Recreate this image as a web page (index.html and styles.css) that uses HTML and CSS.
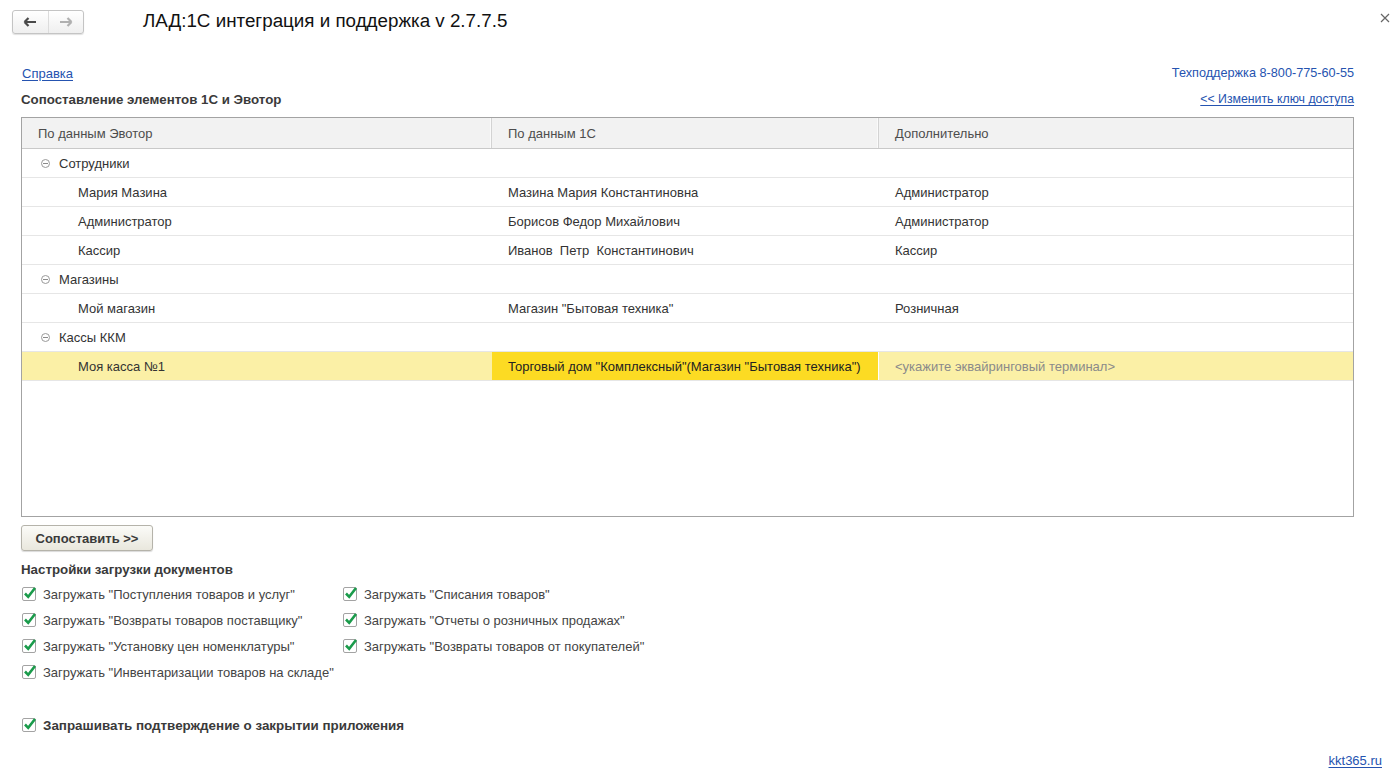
FILE: index.html
```html
<!DOCTYPE html>
<html lang="ru">
<head>
<meta charset="utf-8">
<title>ЛАД:1С интеграция и поддержка</title>
<link rel="stylesheet" href="styles.css">
</head>
<body>
<div class="window">
  <div class="topbar">
    <div class="navgroup">
      <button class="navbtn" aria-label="Назад">
        <svg width="14" height="10" viewBox="0 0 14 10"><path d="M1.5 5H13M1.5 5L5.5 1M1.5 5L5.5 9" fill="none" stroke="#4a4a4a" stroke-width="2.2"/></svg>
      </button>
      <button class="navbtn" aria-label="Вперёд">
        <svg width="14" height="10" viewBox="0 0 14 10"><path d="M1 5H12.5M12.5 5L8.5 1M12.5 5L8.5 9" fill="none" stroke="#b0b0b0" stroke-width="2.2"/></svg>
      </button>
    </div>
    <div class="title">ЛАД:1С интеграция и поддержка v 2.7.7.5</div>
    <div class="close">
      <svg width="10" height="10" viewBox="0 0 10 10"><path d="M1 1L9 9M9 1L1 9" stroke="#666" stroke-width="1.2"/></svg>
    </div>
  </div>

  <div class="content">
    <div class="row-between links">
      <a href="#" class="link">Справка</a>
      <span class="support">Техподдержка 8-800-775-60-55</span>
    </div>
    <div class="row-between heading-row">
      <span class="section-title">Сопоставление элементов 1С и Эвотор</span>
      <a href="#" class="link small">&lt;&lt; Изменить ключ доступа</a>
    </div>

    <div class="grid">
      <div class="thead">
        <div class="th c1">По данным Эвотор</div>
        <div class="th c2">По данным 1С</div>
        <div class="th c3">Дополнительно</div>
      </div>
      <div class="tr group">
        <div class="td c1"><span class="toggle"></span>Сотрудники</div>
        <div class="td c2"></div>
        <div class="td c3"></div>
      </div>
      <div class="tr">
        <div class="td c1 child">Мария Мазина</div>
        <div class="td c2">Мазина Мария Константиновна</div>
        <div class="td c3">Администратор</div>
      </div>
      <div class="tr">
        <div class="td c1 child">Администратор</div>
        <div class="td c2">Борисов Федор Михайлович</div>
        <div class="td c3">Администратор</div>
      </div>
      <div class="tr">
        <div class="td c1 child">Кассир</div>
        <div class="td c2">Иванов&nbsp; Петр&nbsp; Константинович</div>
        <div class="td c3">Кассир</div>
      </div>
      <div class="tr group">
        <div class="td c1"><span class="toggle"></span>Магазины</div>
        <div class="td c2"></div>
        <div class="td c3"></div>
      </div>
      <div class="tr">
        <div class="td c1 child">Мой магазин</div>
        <div class="td c2">Магазин "Бытовая техника"</div>
        <div class="td c3">Розничная</div>
      </div>
      <div class="tr group">
        <div class="td c1"><span class="toggle"></span>Кассы ККМ</div>
        <div class="td c2"></div>
        <div class="td c3"></div>
      </div>
      <div class="tr selected">
        <div class="td c1 child">Моя касса №1</div>
        <div class="td c2 current">Торговый дом "Комплексный"(Магазин "Бытовая техника")</div>
        <div class="td c3 placeholder">&lt;укажите эквайринговый терминал&gt;</div>
      </div>
    </div>

    <button class="btn">Сопоставить &gt;&gt;</button>

    <div class="section-title settings-title">Настройки загрузки документов</div>
    <div class="checks">
      <div class="checkcol first">
        <label class="check"><span class="box"><svg width="16" height="15" viewBox="0 0 16 15"><path d="M3 7.5L6.2 10.8L13 2" fill="none" stroke="#1a9b4b" stroke-width="2.6"/></svg></span>Загружать "Поступления товаров и услуг"</label>
        <label class="check"><span class="box"><svg width="16" height="15" viewBox="0 0 16 15"><path d="M3 7.5L6.2 10.8L13 2" fill="none" stroke="#1a9b4b" stroke-width="2.6"/></svg></span>Загружать "Возвраты товаров поставщику"</label>
        <label class="check"><span class="box"><svg width="16" height="15" viewBox="0 0 16 15"><path d="M3 7.5L6.2 10.8L13 2" fill="none" stroke="#1a9b4b" stroke-width="2.6"/></svg></span>Загружать "Установку цен номенклатуры"</label>
        <label class="check"><span class="box"><svg width="16" height="15" viewBox="0 0 16 15"><path d="M3 7.5L6.2 10.8L13 2" fill="none" stroke="#1a9b4b" stroke-width="2.6"/></svg></span>Загружать "Инвентаризации товаров на складе"</label>
      </div>
      <div class="checkcol">
        <label class="check"><span class="box"><svg width="16" height="15" viewBox="0 0 16 15"><path d="M3 7.5L6.2 10.8L13 2" fill="none" stroke="#1a9b4b" stroke-width="2.6"/></svg></span>Загружать "Списания товаров"</label>
        <label class="check"><span class="box"><svg width="16" height="15" viewBox="0 0 16 15"><path d="M3 7.5L6.2 10.8L13 2" fill="none" stroke="#1a9b4b" stroke-width="2.6"/></svg></span>Загружать "Отчеты о розничных продажах"</label>
        <label class="check"><span class="box"><svg width="16" height="15" viewBox="0 0 16 15"><path d="M3 7.5L6.2 10.8L13 2" fill="none" stroke="#1a9b4b" stroke-width="2.6"/></svg></span>Загружать "Возвраты товаров от покупателей"</label>
      </div>
    </div>

    <label class="check bold confirm"><span class="box"><svg width="16" height="15" viewBox="0 0 16 15"><path d="M3 7.5L6.2 10.8L13 2" fill="none" stroke="#1a9b4b" stroke-width="2.6"/></svg></span>Запрашивать подтверждение о закрытии приложения</label>
  </div>

  <div class="footer">
    <a href="#" class="link">kkt365.ru</a>
  </div>
</div>
</body>
</html>
```

FILE: styles.css
```css
html, body {
  margin: 0;
  padding: 0;
  background: #fff;
}

body {
  font-family: "Liberation Sans", Arial, sans-serif;
  font-size: 13px;
  color: #333;
}

.window {
  width: 1395px;
  height: 779px;
  display: flex;
  flex-direction: column;
  overflow: hidden;
}

/* top bar */
.topbar {
  display: flex;
  align-items: center;
  padding: 10px 0 0 12px;
  height: 24px;
}

.navgroup {
  display: flex;
  width: 72px;
  height: 24px;
  box-sizing: border-box;
  border: 1px solid #c4c4c4;
  border-radius: 3px;
  background: linear-gradient(#ffffff, #efefef);
  box-shadow: 0 1px 1px rgba(0,0,0,0.12);
}

.navbtn {
  flex: 1;
  border: none;
  background: transparent;
  padding: 0;
  display: flex;
  align-items: center;
  justify-content: center;
}

.navbtn + .navbtn {
  border-left: 1px solid #dcdcdc;
}

.title {
  margin-left: 59px;
  font-size: 18.8px;
  color: #111;
  flex: 1;
  position: relative;
  top: -1px;
}

.close {
  width: 10px;
  height: 10px;
  margin-right: 5px;
  display: flex;
  position: relative;
  top: -4px;
}

/* content */
.content {
  padding: 0 41px 0 21px;
  display: flex;
  flex-direction: column;
}

.row-between {
  display: flex;
  justify-content: space-between;
  align-items: center;
  line-height: 15px;
}

.links {
  margin-top: 32px;
  padding-left: 1px;
}

.heading-row {
  margin-top: 11px;
}

.link {
  color: #2553b0;
  text-decoration: underline;
  text-underline-offset: 2px;
}

.link.small {
  font-size: 12.3px;
}

.support {
  color: #2553b0;
  font-size: 12.7px;
}

.section-title {
  font-weight: bold;
  font-size: 13.3px;
  color: #3a3a3a;
}

/* grid */
.grid {
  margin-top: 10px;
  height: 400px;
  box-sizing: border-box;
  border: 1px solid #a3a3a3;
}

.thead,
.tr {
  display: grid;
  grid-template-columns: 470px 387px 1fr;
}

.thead {
  height: 31px;
  box-sizing: border-box;
  background: #f2f2f2;
  border-bottom: 1px solid #c9c9c9;
}

.th {
  display: flex;
  align-items: center;
  padding-left: 16px;
  color: #4d4d4d;
  box-sizing: border-box;
}

.th.c1,
.th.c2 {
  border-right: 1px solid #d3d3d3;
  box-shadow: inset -1px 0 0 #fafafa;
}

.tr {
  height: 29px;
  box-sizing: border-box;
  border-bottom: 1px solid #e6e6e6;
}

.td {
  display: flex;
  align-items: center;
  padding-left: 16px;
  box-sizing: border-box;
  white-space: nowrap;
  color: #333;
}

.tr.group .td.c1 {
  padding-left: 19px;
}

.td.child {
  padding-left: 56px;
}

.toggle {
  width: 9px;
  height: 9px;
  box-sizing: border-box;
  border: 1px solid #9a9a9a;
  border-radius: 50%;
  margin-right: 9px;
  position: relative;
}

.toggle::after {
  content: "";
  position: absolute;
  left: 1px;
  right: 1px;
  top: 3px;
  height: 1px;
  background: #8a8a8a;
}

.tr.selected {
  background: #fbf0a6;
}

.td.current {
  background: #fcdb23;
  border-right: 1px solid #fff;
  color: #222;
}

.td.placeholder {
  color: #8a8a8a;
}

/* button */
.btn {
  margin-top: 8px;
  align-self: flex-start;
  width: 132px;
  height: 26px;
  font-family: inherit;
  font-size: 13px;
  font-weight: bold;
  color: #3a3a3a;
  border: 1px solid #b5b3aa;
  border-radius: 3px;
  background: linear-gradient(#fbfbf8, #e9e7dd);
  box-shadow: 0 1px 1px rgba(0,0,0,0.15);
  padding: 0;
}

.settings-title {
  margin-top: 11px;
  line-height: 15px;
}

/* checkboxes */
.checks {
  display: flex;
  margin-top: 4px;
}

.checkcol {
  display: flex;
  flex-direction: column;
}

.checkcol.first {
  width: 321px;
}

.check {
  display: flex;
  align-items: center;
  height: 26px;
  color: #444;
  white-space: nowrap;
}

.check .box {
  width: 14px;
  height: 14px;
  box-sizing: border-box;
  margin-left: 1px;
  margin-right: 7px;
  border: 1px solid #a3a3a3;
  border-radius: 2px;
  background: #fff;
  position: relative;
}

.check .box svg {
  position: absolute;
  left: -1px;
  top: -2px;
}

.check.bold {
  font-weight: bold;
  font-size: 13.4px;
  color: #3a3a3a;
}

.confirm {
  margin-top: 27px;
}

.footer {
  margin-top: auto;
  display: flex;
  justify-content: flex-end;
  padding: 0 13px 11px 0;
  line-height: 15px;
}
```
